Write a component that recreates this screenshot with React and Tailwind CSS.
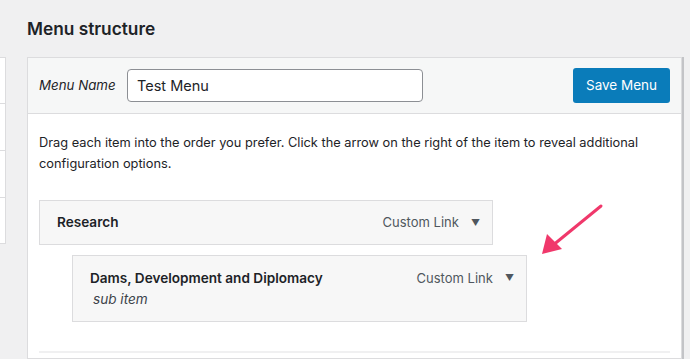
export default function App() {
  const font = { fontFamily: 'Inter, "Noto Sans", sans-serif' };
  return (
    <div className="w-[690px] h-[359px] bg-[#f0f0f1] overflow-hidden relative" style={font}>
      <h2 className="absolute left-[27px] top-[17px] text-[17.3px] font-semibold text-[#1d2327] leading-[24px]">Menu structure</h2>
      <div className="flex pt-[57px] h-full">
        {/* left strip */}
        <div className="w-[6px] shrink-0 flex flex-col">
          <div className="h-[187px] bg-white border-y border-r border-[#dcdcde] flex flex-col">
            <div className="h-[46px] border-b border-[#dcdcde]" />
            <div className="h-[47px] border-b border-[#dcdcde]" />
            <div className="h-[47px] border-b border-[#dcdcde]" />
          </div>
        </div>
        <div className="w-[21px] shrink-0" />
        {/* main panel */}
        <div className="w-[655px] shrink-0 border border-[#dcdcde] bg-white flex flex-col">
          <div className="h-[56px] bg-[#f6f7f7] border-b border-[#dcdcde] flex items-center pl-[11px] pr-[11px]">
            <span className="italic text-[13.3px] text-[#1d2327] w-[88px]">Menu Name</span>
            <div className="w-[296px] h-[33px] border border-[#8c8f94] rounded-[4px] bg-white flex items-center px-[9px] text-[14.5px] text-[#1d2327]">Test Menu</div>
            <div className="flex-1" />
            <button className="w-[97px] h-[35px] bg-[#0a7cba] rounded-[3px] text-white text-[13.5px]">Save Menu</button>
          </div>
          <div className="px-[11px] pt-[18px]">
            <p className="text-[12.8px] leading-[21px] text-[#1d2327]">Drag each item into the order you prefer. Click the arrow on the right of the item to reveal additional configuration options.</p>
            <div className="mt-[26px] w-[454px] h-[45px] bg-[#f7f7f7] border border-[#dcdcde] flex items-center pl-[17px] pr-[12px]">
              <span className="font-semibold text-[13.6px] text-[#1d2327]">Research</span>
              <span className="ml-auto text-[13px] text-[#50575e]">Custom Link</span>
              <span className="ml-[12px] text-[9px] text-[#50575e]">▼</span>
            </div>
            <div className="ml-[33px] mt-[10px] w-[455px] h-[67px] bg-[#f7f7f7] border border-[#dcdcde] flex pl-[17px] pr-[12px] pt-[12px]">
              <div className="flex flex-col">
                <span className="font-semibold text-[13.6px] leading-[20px] text-[#1d2327]">Dams, Development and Diplomacy</span>
                <span className="italic text-[13.6px] leading-[20px] text-[#3c434a] pl-[3px] mt-[1px]">sub item</span>
              </div>
              <div className="ml-auto flex items-start h-[20px]">
                <span className="text-[13px] leading-[20px] text-[#50575e]">Custom Link</span>
                <span className="ml-[12px] text-[9px] leading-[20px] text-[#50575e]">▼</span>
              </div>
            </div>
            <div className="mt-[29px] border-t-2 border-[#f0f0f1] w-[631px]" />
          </div>
        </div>
        <div className="w-[2px] bg-[#c3c4c7] shrink-0" />
      </div>
      <svg className="absolute left-0 top-0" width="690" height="359" viewBox="0 0 690 359">
        <line x1="601" y1="206" x2="552" y2="246" stroke="#f0386b" strokeWidth="3" strokeLinecap="round" />
        <polygon points="542,254 547,234 562,249" fill="#f0386b" />
      </svg>
    </div>
  );
}
